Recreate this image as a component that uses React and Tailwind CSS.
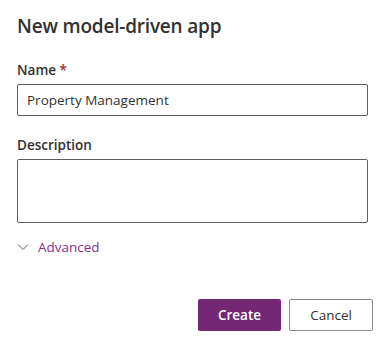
export default function App() {
  return (
    <div className="w-[384px] h-[341px] bg-white text-[#323130] font-['Open_Sans',sans-serif] px-[17px] pt-[12px]">
      <h1 className="text-[19px] leading-[28px] font-semibold tracking-[-0.2px]">New model-driven app</h1>

      <div className="mt-[20px]">
        <label className="block text-[13.5px] leading-[20px] font-semibold">
          Name <span className="text-[#a4262c]">*</span>
        </label>
        <div className="mt-[4px] w-[351px] h-[32px] border border-[#605e5c] rounded-[2px] flex items-center px-[9px] text-[13.5px]">
          Property Management
        </div>
      </div>

      <div className="mt-[19px]">
        <label className="block text-[13.5px] leading-[20px] font-semibold">Description</label>
        <div className="mt-[4px] w-[351px] h-[64px] border border-[#605e5c] rounded-[2px]"></div>
      </div>

      <div className="mt-[14px] flex items-center gap-[9px] text-[13.5px] text-[#8a2d8a]">
        <svg width="12" height="12" viewBox="0 0 12 12" fill="none" stroke="#605e5c" strokeWidth="1">
          <path d="M1 3.5l5 5 5-5" />
        </svg>
        <span>Advanced</span>
      </div>

      <div className="mt-[42px] flex justify-end gap-[8px] mr-[-6px]">
        <button className="w-[83px] h-[32px] rounded-[2px] bg-[#742774] text-white text-[13.5px] font-semibold">
          Create
        </button>
        <button className="w-[84px] h-[32px] rounded-[2px] border border-[#8a8886] bg-white text-[13.5px]">
          Cancel
        </button>
      </div>
    </div>
  );
}
